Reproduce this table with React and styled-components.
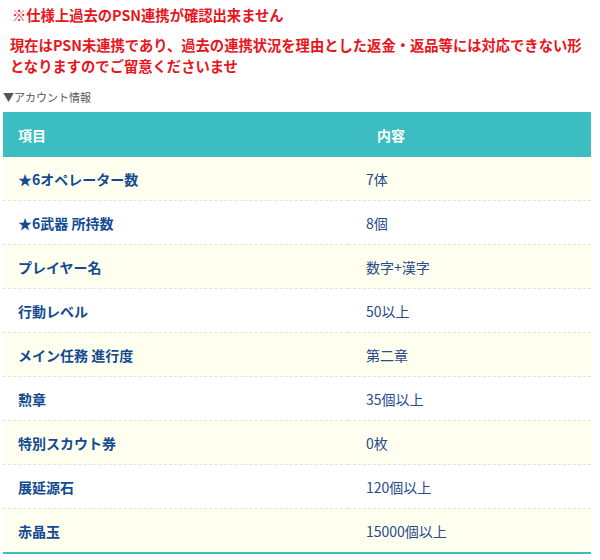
import React from 'react';
import styled, { createGlobalStyle } from 'styled-components';

const ROWS = [
  { label: '★6オペレーター数', value: '7体' },
  { label: '★6武器 所持数', value: '8個' },
  { label: 'プレイヤー名', value: '数字+漢字' },
  { label: '行動レベル', value: '50以上' },
  { label: 'メイン任務 進行度', value: '第二章' },
  { label: '勲章', value: '35個以上' },
  { label: '特別スカウト券', value: '0枚' },
  { label: '展延源石', value: '120個以上' },
  { label: '赤晶玉', value: '15000個以上' }
];

export default function App() {
  return (
    <>
      <GlobalStyle />
      <Page>
        <Notice>※仕様上過去のPSN連携が確認出来ません</Notice>
        <Warning>
          現在はPSN未連携であり、過去の連携状況を理由とした返金・返品等には対応できない形となりますのでご留意くださいませ
        </Warning>
        <Caption>▼アカウント情報</Caption>
        <Table>
          <colgroup>
            <col style={{ width: 345 }} />
            <col />
          </colgroup>
          <thead>
            <tr>
              <HeadCell>項目</HeadCell>
              <HeadCell $value>内容</HeadCell>
            </tr>
          </thead>
          <tbody>
            {ROWS.map((r, i) => (
              <Row key={i} $odd={i % 2 === 0}>
                <LabelCell>{r.label}</LabelCell>
                <ValueCell>{r.value}</ValueCell>
              </Row>
            ))}
          </tbody>
        </Table>
      </Page>
    </>
  );
}

const GlobalStyle = createGlobalStyle`
  html, body {
    margin: 0;
    padding: 0;
    background: #fff;
  }
  body {
    font-family: "Noto Sans CJK JP", "Noto Sans", sans-serif;
  }
`;

const Page = styled.div`
  width: 600px;
  padding: 4px 9px 0 3px;
  box-sizing: border-box;
`;

const Notice = styled.p`
  margin: 0 0 0 9px;
  font-size: 14.3px;
  line-height: 22px;
  font-weight: 700;
  color: #e8141b;
`;

const Warning = styled.p`
  margin: 8px 0 0 7px;
  font-size: 14.3px;
  line-height: 21px;
  font-weight: 700;
  color: #e8141b;
`;

const Caption = styled.div`
  margin: 13px 0 0 0;
  font-size: 11px;
  line-height: 16px;
  color: #555;
`;

const Table = styled.table`
  width: 588px;
  margin-top: 7px;
  table-layout: fixed;
  border-collapse: collapse;
  border-bottom: 2px solid #3bbdc1;
  font-size: 14px;
`;

const HeadCell = styled.th`
  height: 45px;
  padding: 0 0 0 ${p => (p.$value ? '29px' : '15px')};
  background: #3bbdc1;
  color: #fff;
  font-weight: 700;
  text-align: left;
`;

const Row = styled.tr`
  background: ${p => (p.$odd ? '#fffff0' : '#fff')};
  border-top: 1px dashed #e4e4d8;
  &:first-child {
    border-top: none;
  }
`;

const LabelCell = styled.td`
  height: 43px;
  padding: 0 0 0 15px;
  font-weight: 700;
  color: #134a90;
`;

const ValueCell = styled.td`
  padding: 0 0 0 18px;
  color: #284a8c;
`;
